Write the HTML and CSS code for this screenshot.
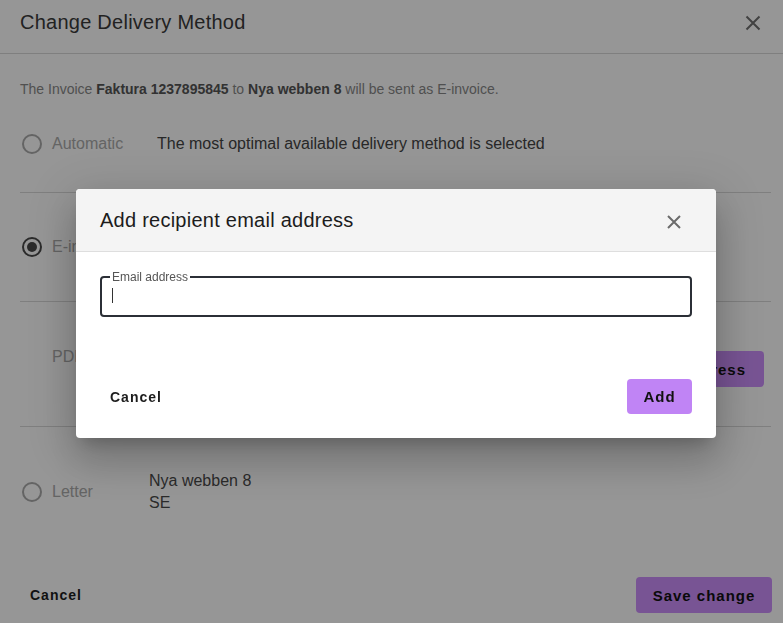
FILE: index.html
```html
<!DOCTYPE html>
<html lang="en">
<head>
  <meta charset="UTF-8">
  <meta name="viewport" content="width=device-width, initial-scale=1.0">
  <title>Change Delivery Method</title>
  <link rel="stylesheet" href="styles.css">
</head>
<body>

<div class="page">
  <header class="page-header">
    <h1>Change Delivery Method</h1>
    <button class="close-btn" aria-label="Close">
      <svg width="16" height="16" viewBox="0 0 16 16"><path d="M1.5 1.5 L14.5 14.5 M14.5 1.5 L1.5 14.5" stroke="currentColor" stroke-width="2" fill="none"/></svg>
    </button>
  </header>

  <div class="page-body">
    <p class="intro">The Invoice <b>Faktura 1237895845</b> to <b>Nya webben 8</b> will be sent as E-invoice.</p>

    <div class="method-row row-auto">
      <label class="method-label"><span class="radio"></span>Automatic</label>
      <div class="method-desc">The most optimal available delivery method is selected</div>
    </div>

    <div class="method-row row-einvoice">
      <label class="method-label"><span class="radio checked"></span>E-invoice</label>
      <div class="method-desc">Sent to the recipient's e-invoice address</div>
    </div>

    <div class="method-row row-pdf">
      <label class="method-label no-radio">PDF</label>
      <div class="method-desc">No email address added</div>
      <button class="primary-btn add-email">Add email address</button>
    </div>

    <div class="method-row row-letter">
      <label class="method-label short"><span class="radio"></span>Letter</label>
      <div class="method-desc address">Nya webben 8<br>SE</div>
    </div>
  </div>

  <footer class="page-footer">
    <button class="text-btn">Cancel</button>
    <button class="primary-btn save-btn">Save change</button>
  </footer>
</div>

<div class="backdrop"></div>

<div class="dialog">
  <div class="dialog-header">
    <h2>Add recipient email address</h2>
    <button class="close-btn small" aria-label="Close">
      <svg width="16" height="16" viewBox="0 0 16 16"><path d="M2 2 L14 14 M14 2 L2 14" stroke="currentColor" stroke-width="2" fill="none"/></svg>
    </button>
  </div>
  <div class="dialog-body">
    <fieldset class="field">
      <legend>Email address</legend>
      <div class="field-input"><span class="caret"></span></div>
    </fieldset>
  </div>
  <div class="dialog-footer">
    <button class="text-btn">Cancel</button>
    <button class="primary-btn add-btn">Add</button>
  </div>
</div>

</body>
</html>
```

FILE: styles.css
```css
body {
  font-family: "Liberation Sans", Arial, sans-serif;
  background-color: #ffffff;
  margin: 0;
  padding: 0;
}
button {
  font-family: inherit;
  border: none;
  background: none;
  cursor: pointer;
  padding: 0;
}
.page {
  height: 100vh;
  display: flex;
  flex-direction: column;
  box-sizing: border-box;
}
.page-header {
  height: 54px;
  box-sizing: border-box;
  padding: 10px 22px 0 20px;
  border-bottom: 1px solid #d9d9d9;
  display: flex;
  justify-content: space-between;
  align-items: flex-start;
}
.page-header h1 {
  margin: 0;
  font-size: 20px;
  font-weight: normal;
  line-height: 25px;
  letter-spacing: 0.25px;
  color: #3a3a3a;
}
.close-btn {
  color: #707070;
  width: 16px;
  height: 16px;
  margin-top: 5px;
  display: flex;
}
.page-body {
  padding: 0 12px 0 20px;
}
.intro {
  margin: 27px 0 0;
  font-size: 14px;
  line-height: 16px;
  color: #888;
}
.intro b {
  color: #555;
}
.method-row {
  display: flex;
  align-items: center;
  border-bottom: 1px solid #d9d9d9;
}
.method-row:last-child {
  border-bottom: none;
}
.row-auto {
  padding: 35px 0 36px;
}
.row-einvoice {
  padding: 42px 0 42px;
}
.row-pdf {
  padding: 43px 0 39px;
  align-items: flex-start;
}
.row-letter {
  padding: 43px 0 0;
}
.method-label {
  width: 137px;
  flex-shrink: 0;
  display: flex;
  align-items: center;
  gap: 10px;
  font-size: 16px;
  line-height: 24px;
  color: #aaa;
  box-sizing: border-box;
}
.method-label.short {
  width: 129px;
}
.method-label.no-radio {
  padding-left: 32px;
}
.radio {
  width: 20px;
  height: 20px;
  margin-left: 2px;
  box-sizing: border-box;
  border: 2px solid #aaa;
  border-radius: 50%;
  display: flex;
  align-items: center;
  justify-content: center;
}
.radio.checked {
  border-color: #4a4a4a;
}
.radio.checked::after {
  content: "";
  width: 10px;
  height: 10px;
  border-radius: 50%;
  background: #4a4a4a;
}
.method-desc {
  flex: 1;
  font-size: 16px;
  line-height: 24px;
  color: #444;
}
.method-desc.address {
  line-height: 22px;
  color: #4a4a4a;
}
.primary-btn {
  background: #cc8ffb;
  color: #111;
  border-radius: 4px;
  font-weight: bold;
  font-size: 15px;
  letter-spacing: 1px;
  height: 36px;
  padding: 0 18px;
}
.add-email {
  margin: 6px 7px 0 0;
}
.page-footer {
  margin-top: auto;
  display: flex;
  justify-content: space-between;
  align-items: center;
  padding: 0 11px 10px 20px;
}
.text-btn {
  font-weight: bold;
  font-size: 14px;
  letter-spacing: 1px;
  color: #1d1d1d;
  padding: 8px 10px;
}
.save-btn {
  width: 136px;
  padding: 0;
}

/* modal */
.backdrop {
  position: fixed;
  inset: 0;
  background: rgba(0, 0, 0, 0.41);
}
.dialog {
  position: absolute;
  left: 76px;
  top: 189px;
  width: 640px;
  background: #fff;
  border-radius: 4px;
  overflow: hidden;
  box-shadow: 0 11px 15px -7px rgba(0, 0, 0, 0.2), 0 24px 38px 3px rgba(0, 0, 0, 0.14), 0 9px 46px 8px rgba(0, 0, 0, 0.12);
}
.dialog-header {
  height: 63px;
  box-sizing: border-box;
  background: #f4f4f4;
  border-bottom: 1px solid #dedede;
  display: flex;
  justify-content: space-between;
  align-items: center;
  padding: 1px 34px 0 24px;
}
.dialog-header h2 {
  margin: 0;
  font-size: 20px;
  font-weight: normal;
  letter-spacing: 0.25px;
  color: #1c1c1c;
}
.close-btn.small {
  margin-top: 2px;
  color: #6b6b6b;
}
.dialog-body {
  padding: 18px 24px 0;
}
.field {
  margin: 0;
  padding: 0 10px 9px 8px;
  border: 2px solid #2b2f36;
  border-radius: 4px;
}
.field legend {
  font-size: 12px;
  line-height: 14px;
  padding: 0 2px;
  color: #555;
}
.field-input {
  height: 22px;
  display: flex;
  align-items: center;
  padding-left: 2px;
}
.caret {
  width: 1px;
  height: 15px;
  background: #333;
}
.dialog-footer {
  display: flex;
  justify-content: space-between;
  align-items: center;
  padding: 62px 24px 24px;
}
.add-btn {
  height: 35px;
  width: 65px;
  padding: 0;
  background: #c084f5;
}
```
